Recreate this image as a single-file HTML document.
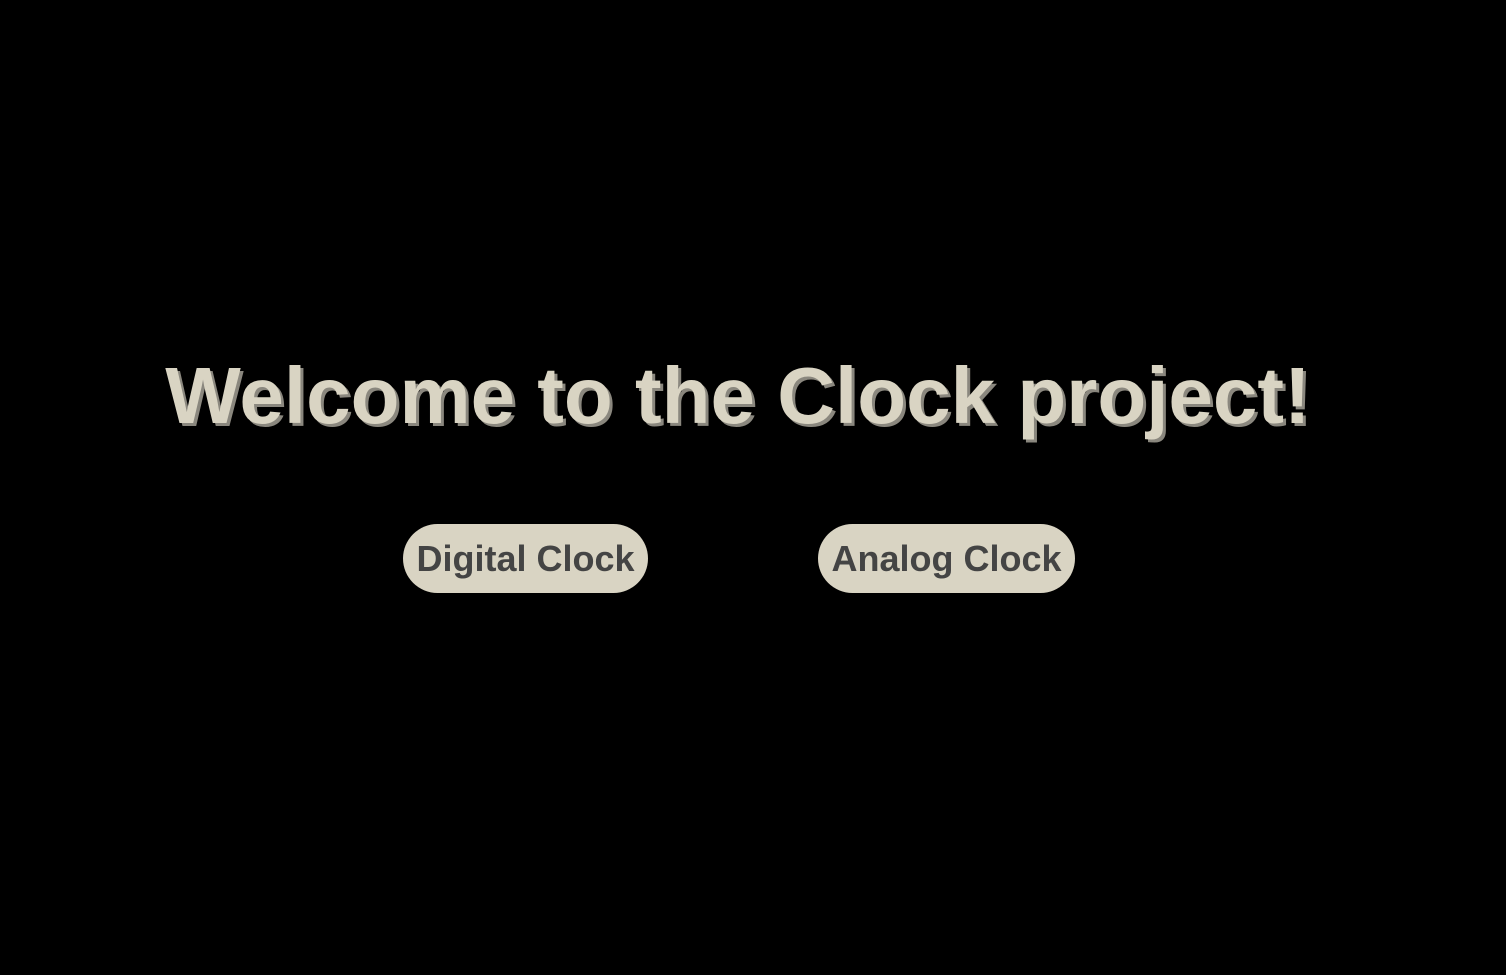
<!DOCTYPE html>
<html><head><style>
html,body{margin:0;background:#000;width:1506px;height:975px;overflow:hidden;font-family:"Liberation Sans",Arial,sans-serif}
h1{position:absolute;left:0;width:1476px;top:338px;margin:0;text-align:center;font-size:80px;font-weight:bold;color:#d9d4c3;text-shadow:3px 3px 0px #8a877e;line-height:115px;white-space:nowrap}
.b{position:absolute;top:524px;height:69px;border-radius:35px;background:#d9d4c3;color:#444;font-weight:bold;font-size:36px;line-height:69px;text-align:center;white-space:nowrap}
</style></head><body>
<h1>Welcome to the Clock project!</h1>
<div class="b" style="left:403px;width:245px">Digital Clock</div>
<div class="b" style="left:818px;width:257px">Analog Clock</div>
</body></html>
